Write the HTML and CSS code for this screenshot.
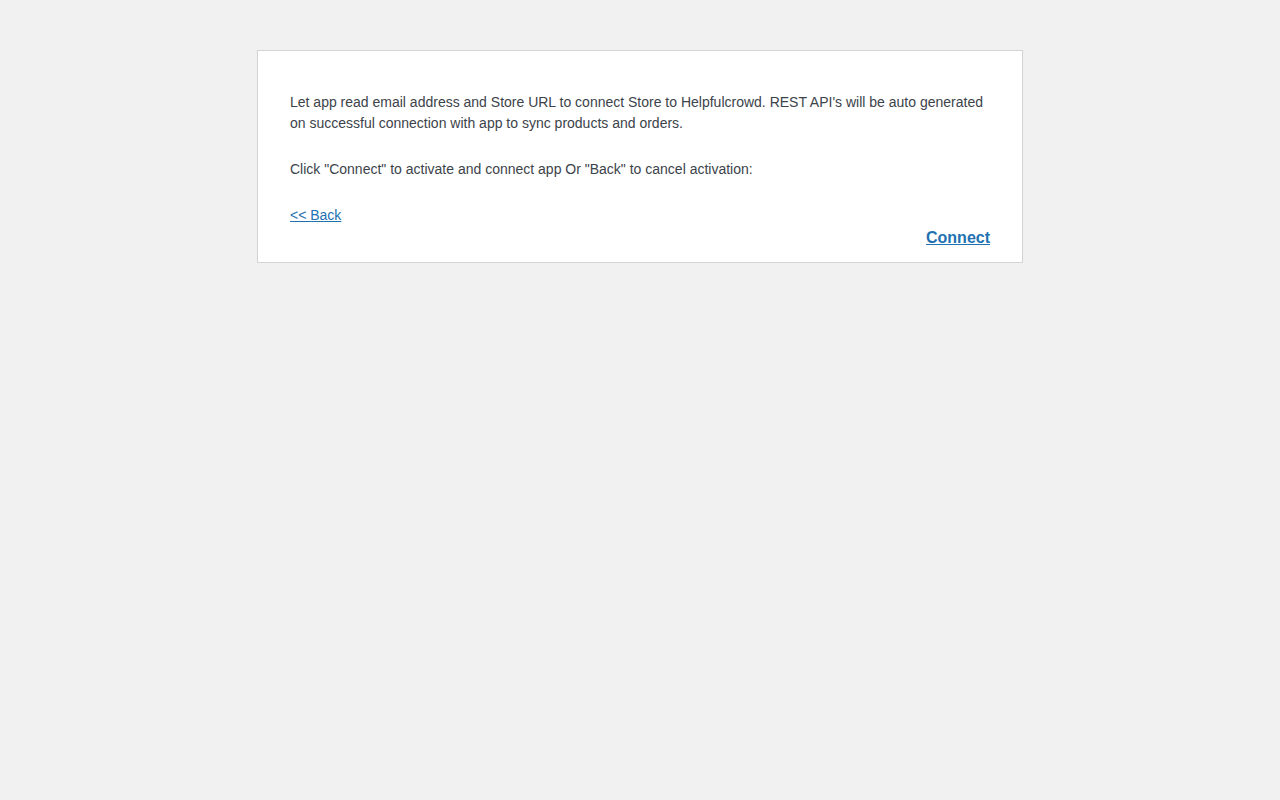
FILE: index.html
```html
<!DOCTYPE html>
<html lang="en">
<head>
    <meta charset="UTF-8">
    <meta name="viewport" content="width=device-width, initial-scale=1.0">
    <title>Connect to Helpfulcrowd</title>
    <link rel="stylesheet" href="styles.css">
</head>
<body>
    <div class="auth-content">
        <p>Let app read email address and Store URL to connect Store to Helpfulcrowd. REST API's will be auto generated on successful connection with app to sync products and orders.</p>
        <p>Click "Connect" to activate and connect app Or "Back" to cancel activation:</p>
        <p class="back-row"><a href="#">&lt;&lt; Back</a></p>
        <div class="auth-actions">
            <a href="#" class="connect-link">Connect</a>
        </div>
    </div>
</body>
</html>
```

FILE: styles.css
```css
body {
    margin: 0;
    padding-top: 50px;
    background: #f1f1f1;
    color: #3c434a;
    font-family: "Liberation Sans", Arial, sans-serif;
    font-size: 14px;
    line-height: 21px;
}
.auth-content {
    width: 700px;
    margin: 0 auto;
    padding: 41px 32px 12px;
    background: #fff;
    border: 1px solid #d4d4d4;
    box-shadow: 0 1px 1px rgba(0, 0, 0, .04);
}
.auth-content p {
    margin: 0 0 25px;
}
.auth-content .back-row {
    margin: 0;
}
a {
    color: #2271b1;
}
.auth-actions {
    text-align: right;
}
.connect-link {
    font-size: 16px;
    font-weight: bold;
    line-height: 24px;
}
```
